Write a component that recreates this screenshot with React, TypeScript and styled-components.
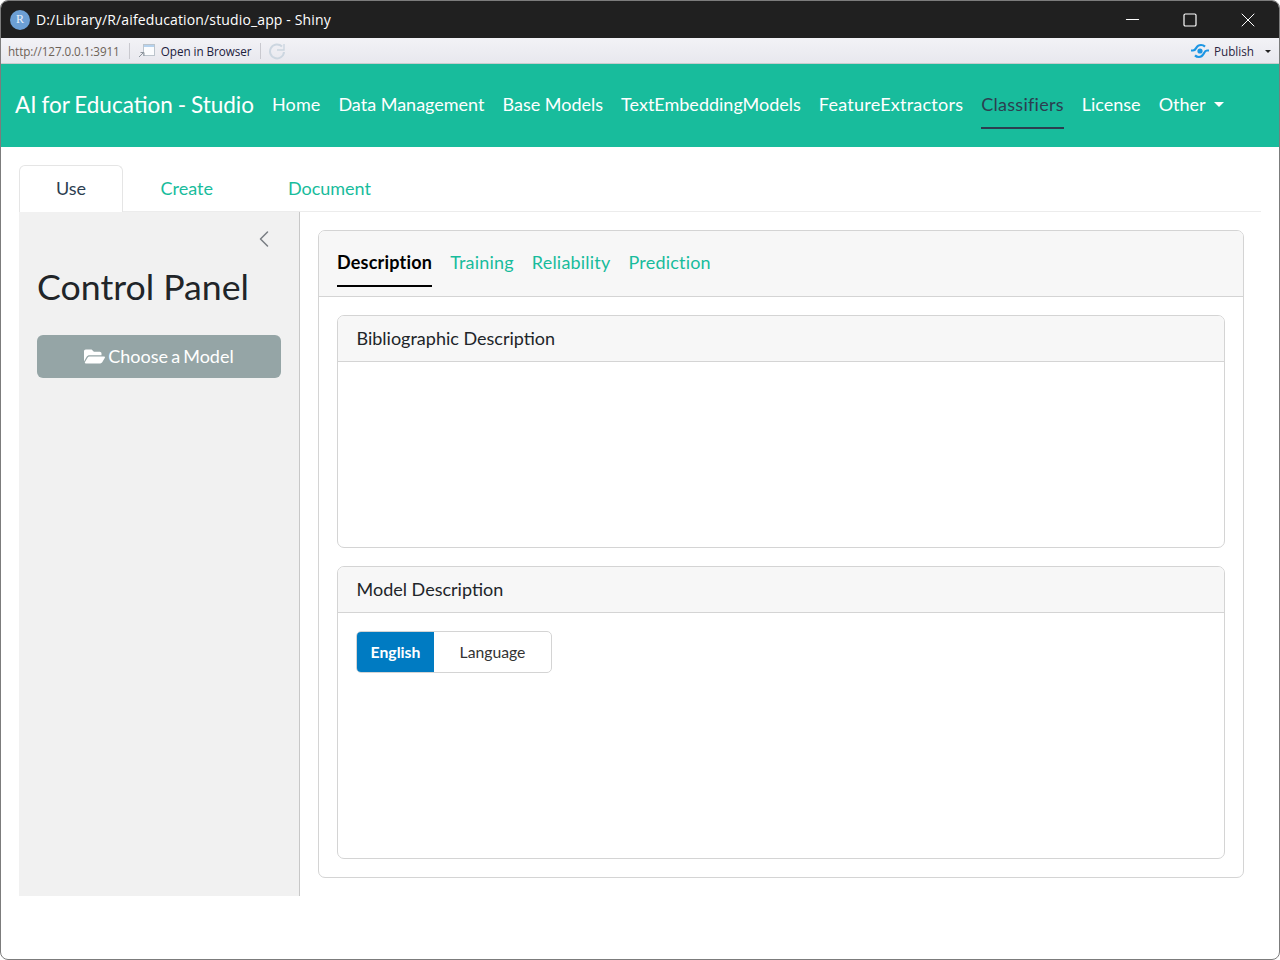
import React from 'react';
import styled, { createGlobalStyle } from 'styled-components';
import { Minus, Square, X, ChevronLeft } from 'lucide-react';
import { FaFolderOpen } from 'react-icons/fa';

const GlobalStyle = createGlobalStyle`
  html, body { margin: 0; padding: 0; background: #fff; }
  body { font-family: Lato, "Liberation Sans", sans-serif; color: #212529; }
  * { box-sizing: border-box; }
`;

const Window = styled.div`
  width: 1280px;
  height: 960px;
  border: 1px solid #7c7c7c;
  border-radius: 8px;
  overflow: hidden;
  background: #fff;
  display: flex;
  flex-direction: column;
`;

const TitleBar = styled.div`
  height: 37px;
  background: #202020;
  color: #fff;
  display: flex;
  align-items: center;
  padding: 0 2px 0 9px;
  font: 14px "Open Sans", "Liberation Sans", sans-serif;
`;

const RLogo = styled.div`
  width: 20px;
  height: 20px;
  border-radius: 50%;
  background: #6c9fd4;
  color: #e8f0fa;
  font: 12px "Liberation Serif", serif;
  display: flex;
  align-items: center;
  justify-content: center;
  margin-right: 6px;
`;

const TitleText = styled.span`
  flex: 1;
  letter-spacing: 0.14px;
`;

const WinButton = styled.div`
  width: 58px;
  height: 37px;
  display: flex;
  align-items: center;
  justify-content: center;
`;

const ToolBar = styled.div`
  height: 26px;
  background: linear-gradient(#f2f2f6, #e8e8ee);
  border-bottom: 1px solid #c8ccce;
  display: flex;
  align-items: center;
  padding: 1px 0 0 7px;
  font: 11.7px "Open Sans", "Liberation Sans", sans-serif;
  color: #20203c;
`;

const Url = styled.span`
  color: #6d6257;
  letter-spacing: -0.08px;
`;

const ToolSep = styled.div<{ $right: number }>`
  width: 1px;
  height: 16px;
  background: #c9c9cf;
  margin: 0 ${(p) => p.$right}px 0 9px;
`;

const BrowserLabel = styled.span`
  margin-left: 6px;
  letter-spacing: -0.05px;
`;

const PublishLabel = styled.span`
  margin-left: 4px;
`;

const Publish = styled.div`
  margin-left: auto;
  display: flex;
  align-items: center;
  padding-right: 8px;
  color: #2a2440;
`;

const Caret = styled.div<{ $c: string; $w: number }>`
  width: 0;
  height: 0;
  border-left: ${(p) => p.$w}px solid transparent;
  border-right: ${(p) => p.$w}px solid transparent;
  border-top: ${(p) => p.$w}px solid ${(p) => p.$c};
`;

const PublishCaret = styled(Caret)`
  margin-left: 11px;
`;

const NavBar = styled.nav`
  height: 83px;
  background: #18bc9c;
  display: flex;
  align-items: center;
  padding-left: 14px;
`;

const Brand = styled.div`
  color: #fff;
  font-size: 22.5px;
  word-spacing: -0.9px;
  margin-right: 18px;
  white-space: nowrap;
  position: relative;
  top: -1px;
`;

const NavItem = styled.div<{ $active?: boolean; $ls?: number }>`
  color: ${(p) => (p.$active ? '#2c3e50' : '#fff')};
  font-size: 18px;
  letter-spacing: ${(p) => p.$ls ?? 0}px;
  height: 49px;
  padding-top: 1px;
  margin-right: 18px;
  display: flex;
  align-items: center;
  gap: 8px;
  border-bottom: 2px solid ${(p) => (p.$active ? '#2c3e50' : 'transparent')};
  position: relative;
  top: -1px;
  white-space: nowrap;
`;

const Content = styled.div`
  flex: 1;
  padding: 18px 18px 0;
  display: flex;
  flex-direction: column;
`;

const TabRow = styled.div`
  display: flex;
  height: 47px;
  border-bottom: 1px solid #ececec;
`;

const Tab = styled.div<{ $active?: boolean }>`
  height: ${(p) => (p.$active ? 47 : 46)}px;
  padding: 0 36.5px 2px;
  display: flex;
  align-items: center;
  font-size: 18px;
  color: ${(p) => (p.$active ? '#2c3e50' : '#18bc9c')};
  background: ${(p) => (p.$active ? '#fff' : 'transparent')};
  border: 1px solid ${(p) => (p.$active ? '#e5e5e5' : 'transparent')};
  border-bottom: 0;
  border-radius: 6px 6px 0 0;
  width: ${(p) => (p.$active ? '104px' : 'auto')};
  justify-content: center;
`;

const Layout = styled.div`
  display: flex;
  height: 684px;
`;

const Sidebar = styled.aside`
  width: 281px;
  background: #f1f1f1;
  border-right: 1px solid #c8c8c8;
  padding: 18px 18px 0;
`;

const CollapseRow = styled.div`
  display: flex;
  justify-content: flex-end;
  align-items: center;
  height: 18px;
  padding-right: 3px;
  color: #7a7f84;
`;

const PanelTitle = styled.h2`
  margin: 18px 0 27px;
  font-size: 35.7px;
  font-weight: 400;
  line-height: 42px;
  color: #212529;
`;

const ChooseButton = styled.div`
  height: 43px;
  width: 244px;
  padding-bottom: 1px;
  border-radius: 6px;
  background: #95a5a6;
  color: #fff;
  font-size: 18px;
  word-spacing: -1.5px;
  display: flex;
  align-items: center;
  justify-content: center;
  gap: 3px;
`;

const Main = styled.main`
  flex: 1;
  padding: 18px 17px 0 18px;
`;

const OuterCard = styled.section`
  height: 648px;
  border: 1px solid #d4d4d4;
  border-radius: 7px;
  overflow: hidden;
`;

const OuterHeader = styled.div`
  height: 66px;
  background: #f7f7f7;
  border-bottom: 1px solid #d4d4d4;
  display: flex;
  gap: 18px;
  padding: 13px 18px 0;
`;

const Pill = styled.div<{ $active?: boolean }>`
  height: 43px;
  line-height: 36px;
  font-size: 18px;
  letter-spacing: 0.2px;
  font-weight: ${(p) => (p.$active ? 700 : 400)};
  color: ${(p) => (p.$active ? '#000' : '#18bc9c')};
  border-bottom: 2px solid ${(p) => (p.$active ? '#000' : 'transparent')};
`;

const OuterBody = styled.div`
  padding: 18px 18px 0;
  display: flex;
  flex-direction: column;
  gap: 18px;
`;

const Card = styled.div<{ $h: number }>`
  height: ${(p) => p.$h}px;
  border: 1px solid #d4d4d4;
  border-radius: 7px;
  overflow: hidden;
`;

const CardHeader = styled.div`
  height: 46px;
  background: #f7f7f7;
  border-bottom: 1px solid #d4d4d4;
  padding: 0 18.5px 2px;
  display: flex;
  align-items: center;
  font-size: 18px;
  color: #212529;
`;

const CardBody = styled.div`
  padding: 18px;
`;

const ButtonGroup = styled.div`
  width: 196px;
  height: 42px;
  border: 1px solid #d4d4d4;
  border-radius: 5px;
  display: flex;
  overflow: hidden;
  font-size: 15.75px;
`;

const LangValue = styled.div`
  width: 77px;
  padding-bottom: 2px;
  background: #007bc2;
  color: #fff;
  font-weight: 700;
  display: flex;
  align-items: center;
  justify-content: center;
`;

const LangLabel = styled.div`
  flex: 1;
  padding-bottom: 2px;
  color: #333;
  display: flex;
  align-items: center;
  justify-content: center;
`;

const App = () => {
  return (
    <>
      <GlobalStyle />
      <Window>
        <TitleBar>
          <RLogo>R</RLogo>
          <TitleText>D:/Library/R/aifeducation/studio_app - Shiny</TitleText>
          <WinButton><Minus size={21} color="#fff" strokeWidth={1.2} /></WinButton>
          <WinButton><Square size={16} color="#fff" strokeWidth={1.8} /></WinButton>
          <WinButton><X size={24} color="#fff" strokeWidth={1} /></WinButton>
        </TitleBar>
        <ToolBar>
          <Url>http://127.0.0.1:3911</Url>
          <ToolSep $right={8} />
          <svg width="17" height="16" viewBox="0 0 17 16">
            <rect x="5.5" y="1.5" width="11" height="11" fill="#fbfcfe" stroke="#bcc4cc" />
            <rect x="6" y="2" width="10" height="2" fill="#b5d2ee" />
            <path d="M1 14l4-4M2.5 9.5h3.5v3.5" stroke="#8d959d" fill="none" />
          </svg>
          <BrowserLabel>Open in Browser</BrowserLabel>
          <ToolSep $right={7} />
          <svg width="18" height="18" viewBox="0 0 18 18" fill="none" stroke="#ccd6e0" strokeWidth="2">
            <path d="M14 4.5a7 7 0 1 0 2 5.5" />
            <path d="M9 8h7V2" strokeWidth="1.4" />
          </svg>
          <Publish>
            <svg width="20" height="16" viewBox="0 0 20 16" fill="none" stroke="#1c96e4" strokeWidth="2.2">
              <path d="M1 7.5h2c2 0 2.5-1.2 3.5-3S9 2 11 2c1.5 0 2.8.4 4 1.6" />
              <path d="M19 7.5h-2c-2 0-2.5 1.7-3.5 3.5S11 14 9 14c-1.5 0-2.8-.4-4-1.6" />
              <circle cx="10" cy="8" r="2.6" fill="#1c96e4" stroke="none" />
            </svg>
            <PublishLabel>Publish</PublishLabel>
            <PublishCaret $c="#222" $w={3} />
          </Publish>
        </ToolBar>
        <NavBar>
          <Brand>AI for Education - Studio</Brand>
          <NavItem $ls={0.1}>Home</NavItem>
          <NavItem>Data Management</NavItem>
          <NavItem>Base Models</NavItem>
          <NavItem>TextEmbeddingModels</NavItem>
          <NavItem $ls={0.24}>FeatureExtractors</NavItem>
          <NavItem $active $ls={0.27}>Classifiers</NavItem>
          <NavItem>License</NavItem>
          <NavItem>Other <Caret $c="#fff" $w={5} /></NavItem>
        </NavBar>
        <Content>
          <TabRow>
            <Tab $active>Use</Tab>
            <Tab>Create</Tab>
            <Tab>Document</Tab>
          </TabRow>
          <Layout>
            <Sidebar>
              <CollapseRow><ChevronLeft size={28} strokeWidth={1.3} /></CollapseRow>
              <PanelTitle>Control Panel</PanelTitle>
              <ChooseButton><FaFolderOpen size={21} /> Choose a Model</ChooseButton>
            </Sidebar>
            <Main>
              <OuterCard>
                <OuterHeader>
                  <Pill $active>Description</Pill>
                  <Pill>Training</Pill>
                  <Pill>Reliability</Pill>
                  <Pill>Prediction</Pill>
                </OuterHeader>
                <OuterBody>
                  <Card $h={233}>
                    <CardHeader>Bibliographic Description</CardHeader>
                  </Card>
                  <Card $h={293}>
                    <CardHeader>Model Description</CardHeader>
                    <CardBody>
                      <ButtonGroup>
                        <LangValue>English</LangValue>
                        <LangLabel>Language</LangLabel>
                      </ButtonGroup>
                    </CardBody>
                  </Card>
                </OuterBody>
              </OuterCard>
            </Main>
          </Layout>
        </Content>
      </Window>
    </>
  );
};

export default App;
